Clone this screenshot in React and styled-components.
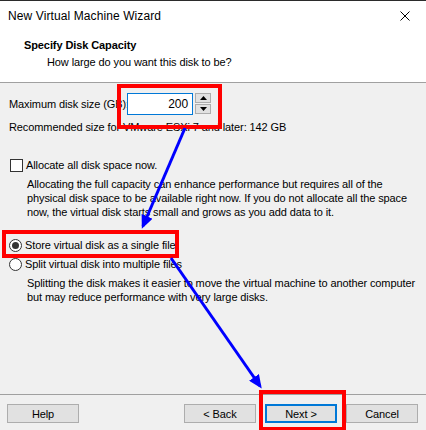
import React from 'react';
import styled, { createGlobalStyle } from 'styled-components';

const GlobalStyle = createGlobalStyle`
  html, body {
    margin: 0;
    padding: 0;
    background: #f0f0f0;
  }
  body {
    font-family: "Liberation Sans", Arial, sans-serif;
    font-size: 11px;
    letter-spacing: -0.1px;
    color: #000;
  }
`;

function App() {
  return (
    <>
      <GlobalStyle />
      <Window>
        <TitleBar>
          <TitleText>New Virtual Machine Wizard</TitleText>
          <CloseIcon viewBox="0 0 10 10">
            <path d="M0.5 0.5 L9.5 9.5 M9.5 0.5 L0.5 9.5" stroke="#000" strokeWidth="1" />
          </CloseIcon>
        </TitleBar>
        <Header>
          <Heading>Specify Disk Capacity</Heading>
          <Subheading>How large do you want this disk to be?</Subheading>
        </Header>
        <Body>
          <SizeRow>
            <Label>Maximum disk size (GB):</Label>
            <Spin>
              <NumberBox>200</NumberBox>
              <SpinButtons>
                <SpinButton>
                  <Tri viewBox="0 0 7 4"><path d="M0 4 L3.5 0 L7 4 Z" fill="#000" /></Tri>
                </SpinButton>
                <SpinButton>
                  <Tri viewBox="0 0 7 4"><path d="M0 0 L3.5 4 L7 0 Z" fill="#000" /></Tri>
                </SpinButton>
              </SpinButtons>
            </Spin>
          </SizeRow>
          <Note>Recommended size for VMware ESXi 7 and later: 142 GB</Note>

          <Option $top={24}>
            <CheckBox />
            <span>Allocate all disk space now.</span>
          </Option>
          <Description>
            Allocating the full capacity can enhance performance but requires all of the
            physical disk space to be available right now. If you do not allocate all the space
            now, the virtual disk starts small and grows as you add data to it.
          </Description>

          <Option $top={19}>
            <Radio $checked />
            <span>Store virtual disk as a single file</span>
          </Option>
          <Option $top={5}>
            <Radio />
            <span>Split virtual disk into multiple files</span>
          </Option>
          <Description>
            Splitting the disk makes it easier to move the virtual machine to another computer
            but may reduce performance with very large disks.
          </Description>
        </Body>
        <Footer>
          <Button>Help</Button>
          <Spacer />
          <Button>&lt; Back</Button>
          <Button $primary>Next &gt;</Button>
          <Button>Cancel</Button>
        </Footer>

        <Annotations viewBox="0 0 426 430">
          <defs>
            <marker id="head" markerWidth="4.5" markerHeight="4" refX="3.5" refY="2" orient="auto" markerUnits="strokeWidth">
              <path d="M0 0 L4.5 2 L0 4 Z" fill="#0000ff" />
            </marker>
          </defs>
          <rect x="119" y="85" width="101" height="41" fill="none" stroke="#ff0000" strokeWidth="4" />
          <rect x="4" y="231" width="173" height="24" fill="none" stroke="#ff0000" strokeWidth="4" />
          <rect x="261" y="391" width="83" height="37" fill="none" stroke="#ff0000" strokeWidth="4" />
          <line x1="185" y1="127" x2="143" y2="225" stroke="#0000ff" strokeWidth="3" markerEnd="url(#head)" />
          <line x1="171" y1="257" x2="260" y2="385" stroke="#0000ff" strokeWidth="3" markerEnd="url(#head)" />
        </Annotations>
      </Window>
    </>
  );
}

export default App;

const Window = styled.div`
  position: relative;
  width: 426px;
  height: 430px;
  display: flex;
  flex-direction: column;
  background: #f0f0f0;
  border-top: 1px solid #2b2b2b;
  box-sizing: border-box;
  overflow: hidden;
`;

const TitleBar = styled.div`
  height: 29px;
  display: flex;
  align-items: center;
  justify-content: space-between;
  padding: 0 16px 0 8px;
  background: #fff;
`;

const TitleText = styled.div`
  font-family: "Liberation Sans", sans-serif;
  font-size: 12px;
  letter-spacing: 0.1px;
  color: #000;
`;

const CloseIcon = styled.svg`
  width: 10px;
  height: 10px;
`;

const Header = styled.div`
  height: 53px;
  box-sizing: border-box;
  padding: 8px 0 0 24px;
  background: #fff;
  border-bottom: 1px solid #a0a0a0;
`;

const Heading = styled.div`
  font-weight: bold;
  line-height: 14px;
`;

const Subheading = styled.div`
  padding-left: 23px;
  margin-top: 3px;
  line-height: 14px;
`;

const Body = styled.div`
  flex: 1;
  padding: 10px 0 0 9px;
  display: flex;
  flex-direction: column;
`;

const SizeRow = styled.div`
  display: flex;
  align-items: center;
  height: 22px;
`;

const Label = styled.span`
  width: 118px;
  white-space: nowrap;
`;

const Spin = styled.div`
  display: flex;
  gap: 2px;
`;

const NumberBox = styled.div`
  width: 66px;
  height: 22px;
  box-sizing: border-box;
  border: 1px solid #0078d7;
  background: #fff;
  text-align: right;
  padding: 0 4px;
  line-height: 20px;
  font-size: 12px;
`;

const SpinButtons = styled.div`
  display: flex;
  flex-direction: column;
  gap: 1px;
`;

const SpinButton = styled.div`
  width: 16px;
  height: 10px;
  box-sizing: border-box;
  border: 1px solid #adadad;
  background: #e1e1e1;
  display: flex;
  align-items: center;
  justify-content: center;
`;

const Tri = styled.svg`
  width: 7px;
  height: 4px;
`;

const Note = styled.div`
  margin-top: 5px;
  line-height: 14px;
`;

const Option = styled.div`
  display: flex;
  align-items: center;
  gap: 3px;
  height: 14px;
  margin-top: ${(p) => p.$top}px;
`;

const CheckBox = styled.span`
  width: 13px;
  height: 13px;
  box-sizing: border-box;
  border: 1px solid #333;
  background: #fff;
  margin-left: 1px;
`;

const Radio = styled.span`
  position: relative;
  width: 13px;
  height: 13px;
  box-sizing: border-box;
  border: 1px solid #333;
  border-radius: 50%;
  background: #fff;

  &::after {
    content: '';
    display: ${(p) => (p.$checked ? 'block' : 'none')};
    position: absolute;
    left: 2px;
    top: 2px;
    width: 7px;
    height: 7px;
    border-radius: 50%;
    background: #333;
  }
`;

const Description = styled.div`
  margin: 5px 0 0 18px;
  line-height: 14px;
  width: 396px;
`;

const Footer = styled.div`
  height: 36px;
  box-sizing: border-box;
  border-top: 1px solid #a0a0a0;
  display: flex;
  align-items: flex-start;
  padding: 9px 8px 0 7px;
  gap: 9px;
`;

const Spacer = styled.div`
  flex: 1;
`;

const Button = styled.div`
  width: 72px;
  height: 19px;
  box-sizing: border-box;
  border: ${(p) => (p.$primary ? '2px solid #0078d7' : '1px solid #adadad')};
  background: #e1e1e1;
  display: flex;
  align-items: center;
  justify-content: center;
  font-size: 11px;
`;

const Annotations = styled.svg`
  position: absolute;
  left: 0;
  top: 0;
  width: 426px;
  height: 430px;
  pointer-events: none;
`;
